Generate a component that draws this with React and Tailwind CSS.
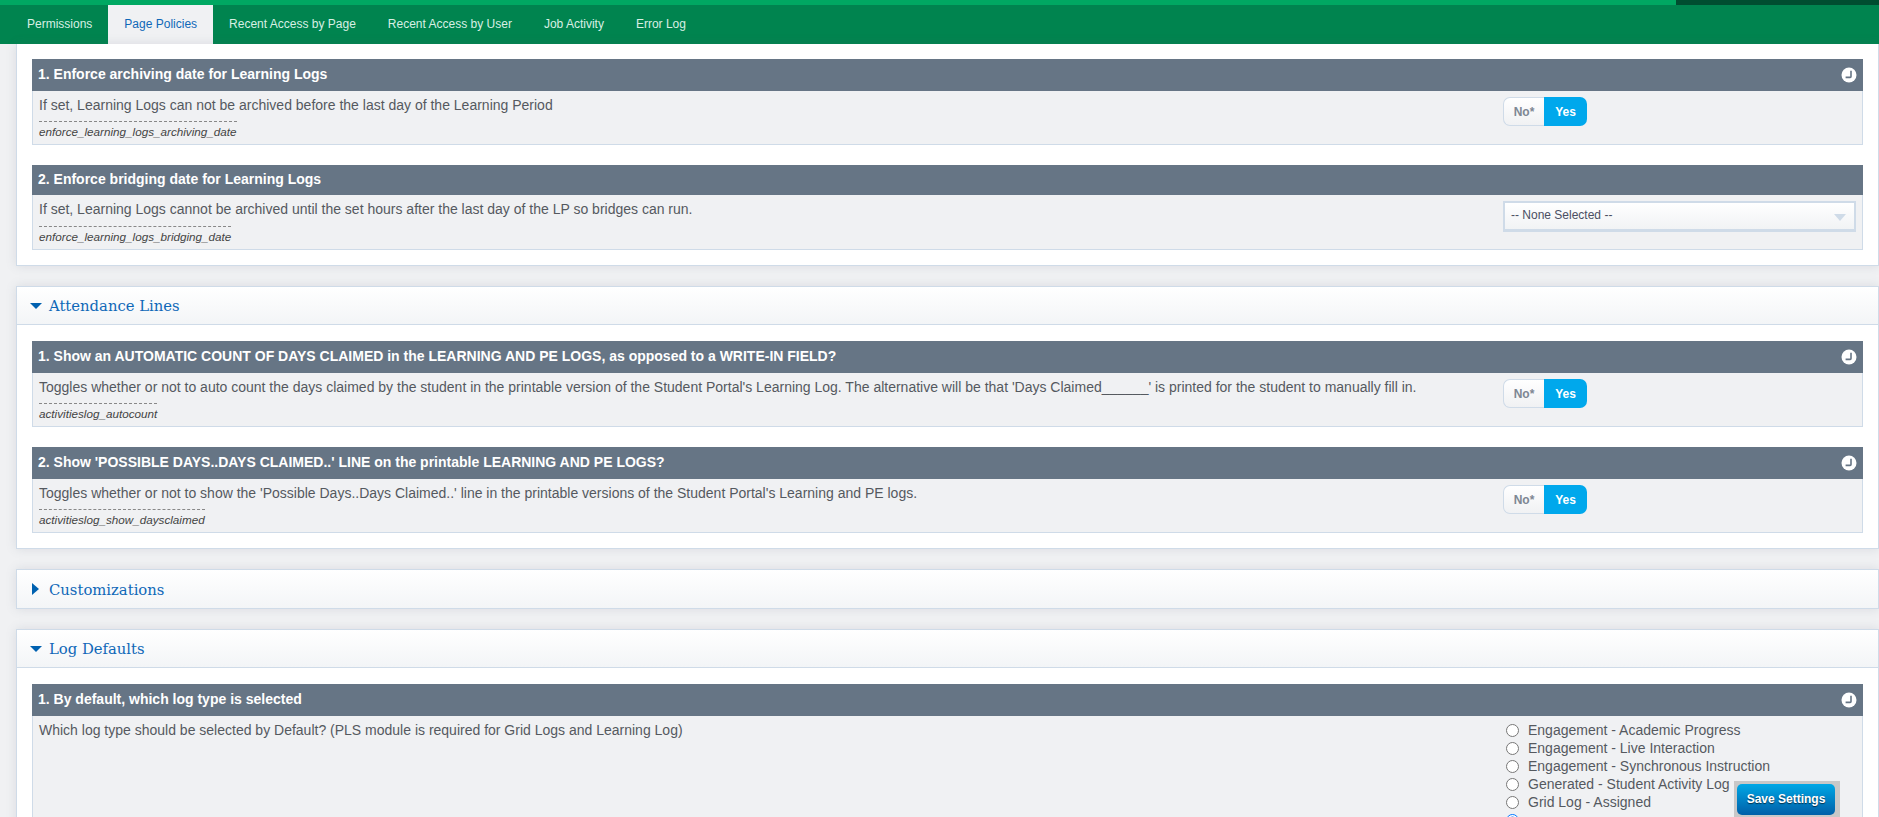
import React from "react";

const tabs = ["Permissions", "Page Policies", "Recent Access by Page", "Recent Access by User", "Job Activity", "Error Log"];

const logTypes = [
  "Engagement - Academic Progress",
  "Engagement - Live Interaction",
  "Engagement - Synchronous Instruction",
  "Generated - Student Activity Log",
  "Grid Log - Assigned",
];

const ClockIcon = () => (
  <svg width="16" height="16" viewBox="0 0 16 16" className="absolute right-[6px] top-1/2 -translate-y-1/2">
    <circle cx="8" cy="8" r="7.5" fill="#fff" />
    <path d="M10 3.8 V9.6 Q10 10.4 9.2 10.4 H4.6" fill="none" stroke="#667585" strokeWidth="1.6" />
  </svg>
);

const Toggle = () => (
  <div className="mt-[6px] flex h-[29px] w-[84px] text-[12px] font-bold">
    <div className="flex w-[41px] items-center justify-center rounded-l-[7px] border border-r-0 border-[#cfdbe8] bg-gradient-to-b from-white to-[#f0f1f3] text-[#7d8793]">
      No*
    </div>
    <div className="flex w-[43px] items-center justify-center rounded-r-[7px] bg-[#00a8ec] text-white">Yes</div>
  </div>
);

const Select = () => (
  <div className="relative mt-[6px] flex h-[31px] w-[353px] items-center border-2 border-b-[3px] border-[#cfdbe8] bg-gradient-to-b from-white to-[#f1f3f5] pb-[3px] pl-[6px] text-[12px] text-[#4b4f63]">
    -- None Selected --
    <span className="absolute right-[8px] top-[11px] h-0 w-0 border-x-[6px] border-t-[7px] border-x-transparent border-t-[#cfdbe8]" />
  </div>
);

const Block = ({ title, text, code, clock, control, headerH = "h-[32px]", codeGap = "mt-[7px]" }) => (
  <div>
    <div className={`relative flex ${headerH} items-center bg-[#667585] pb-[2px] pl-[6px] text-[14px] font-bold text-white`}>
      {title}
      {clock && <ClockIcon />}
    </div>
    <div className="flex border-x border-b border-[#cfdbe8] bg-[#f0f1f3] text-[#55595f]">
      <div className="flex-1 pb-[4px] pl-[6px] pt-[5px]">
        <div className="text-[14px] leading-[18px]">{text}</div>
        {code && (
          <div className={`${codeGap} w-fit border-t border-dashed border-[#888] pt-[1px] text-[11.7px] italic leading-[17px] text-[#444]`}>
            {code}
          </div>
        )}
      </div>
      <div className="w-[359px]">{control}</div>
    </div>
  </div>
);

const SectionHead = ({ title, open }) => (
  <div className={`flex h-[38px] items-center gap-[7px] bg-gradient-to-b from-white to-[#f3f5f7] pl-[13px] ${open ? "border-b border-[#cfdbe8]" : ""}`}>
    {open ? (
      <span className="h-0 w-0 border-x-[6px] border-t-[6px] border-x-transparent border-t-[#0061b0]" />
    ) : (
      <span className="ml-[2px] mr-[3px] h-0 w-0 border-y-[6px] border-l-[7px] border-y-transparent border-l-[#0061b0]" />
    )}
    <span className="pt-[2px] font-['DejaVu_Serif',serif] text-[14.8px] text-[#0f68b8]">{title}</span>
  </div>
);

const cardClass = "border border-[#cfdbe8] bg-white shadow-[0_0_10px_rgba(90,100,120,0.15)]";

export default function App() {
  return (
    <div className="relative h-screen overflow-hidden bg-[#f0f1f3] font-['Liberation_Sans',sans-serif]">
      {/* top progress strip */}
      <div className="flex h-[5px]">
        <div className="w-[1676px] bg-[#00a862]" />
        <div className="flex-1 bg-[#004d30]" />
      </div>

      {/* tabs */}
      <div className="flex h-[39px] bg-[#00844f] pl-[11px] text-[12px]">
        {tabs.map((t) => (
          <div
            key={t}
            className={`flex items-center px-[16px] pb-[1px] ${t === "Page Policies" ? "bg-[#f0f1f3] text-[#0f68b8]" : "text-[#d8efe4]"}`}
          >
            {t}
          </div>
        ))}
      </div>

      <div className="ml-[16px] flex flex-col gap-[20px]">
        <div className={`${cardClass} flex flex-col gap-[20px] border-t-0 px-[15px] py-[15px]`}>
          <Block
            title="1. Enforce archiving date for Learning Logs"
            text="If set, Learning Logs can not be archived before the last day of the Learning Period"
            code="enforce_learning_logs_archiving_date"
            clock
            control={<Toggle />}
          />
          <Block
            title="2. Enforce bridging date for Learning Logs"
            text="If set, Learning Logs cannot be archived until the set hours after the last day of the LP so bridges can run."
            code="enforce_learning_logs_bridging_date"
            headerH="h-[30px]"
            codeGap="mt-[8px]"
            control={<Select />}
          />
        </div>

        <div className={cardClass}>
          <SectionHead title="Attendance Lines" open />
          <div className="flex flex-col gap-[20px] px-[15px] pb-[15px] pt-[16px]">
            <Block
              title="1. Show an AUTOMATIC COUNT OF DAYS CLAIMED in the LEARNING AND PE LOGS, as opposed to a WRITE-IN FIELD?"
              text="Toggles whether or not to auto count the days claimed by the student in the printable version of the Student Portal's Learning Log. The alternative will be that 'Days Claimed______' is printed for the student to manually fill in."
              code="activitieslog_autocount"
              clock
              control={<Toggle />}
            />
            <Block
              title="2. Show 'POSSIBLE DAYS..DAYS CLAIMED..' LINE on the printable LEARNING AND PE LOGS?"
              text="Toggles whether or not to show the 'Possible Days..Days Claimed..' line in the printable versions of the Student Portal's Learning and PE logs."
              code="activitieslog_show_daysclaimed"
              clock
              control={<Toggle />}
            />
          </div>
        </div>

        <div className={cardClass}>
          <SectionHead title="Customizations" />
        </div>

        <div className={cardClass}>
          <SectionHead title="Log Defaults" open />
          <div className="px-[15px] py-[16px]">
            <Block
              title="1. By default, which log type is selected"
              text="Which log type should be selected by Default? (PLS module is required for Grid Logs and Learning Log)"
              clock
              control={
                <div className="pt-[5px] text-[14px] leading-[18px]">
                  {logTypes.map((l) => (
                    <label key={l} className="flex h-[18px] items-center">
                      <input type="radio" name="logtype" className="ml-[3px] mr-[9px] h-[13px] w-[13px]" />
                      {l}
                    </label>
                  ))}
                  <div className="flex h-[18px] items-center">
                    <input type="radio" name="logtype" defaultChecked className="ml-[3px] h-[13px] w-[13px]" />
                  </div>
                </div>
              }
            />
          </div>
        </div>
      </div>

      {/* floating save button */}
      <div className="absolute bottom-0 right-[39px] h-[36px] w-[106px] bg-[#c8c8c8] px-[3px] pt-[3px]">
        <button className="h-[31px] w-[98px] rounded-[5px] bg-gradient-to-b from-[#00a8e6] to-[#005fa8] pb-[2px] text-[12px] font-bold text-white [text-shadow:0_1px_1px_rgba(0,0,0,0.6)]">
          Save Settings
        </button>
      </div>
    </div>
  );
}
